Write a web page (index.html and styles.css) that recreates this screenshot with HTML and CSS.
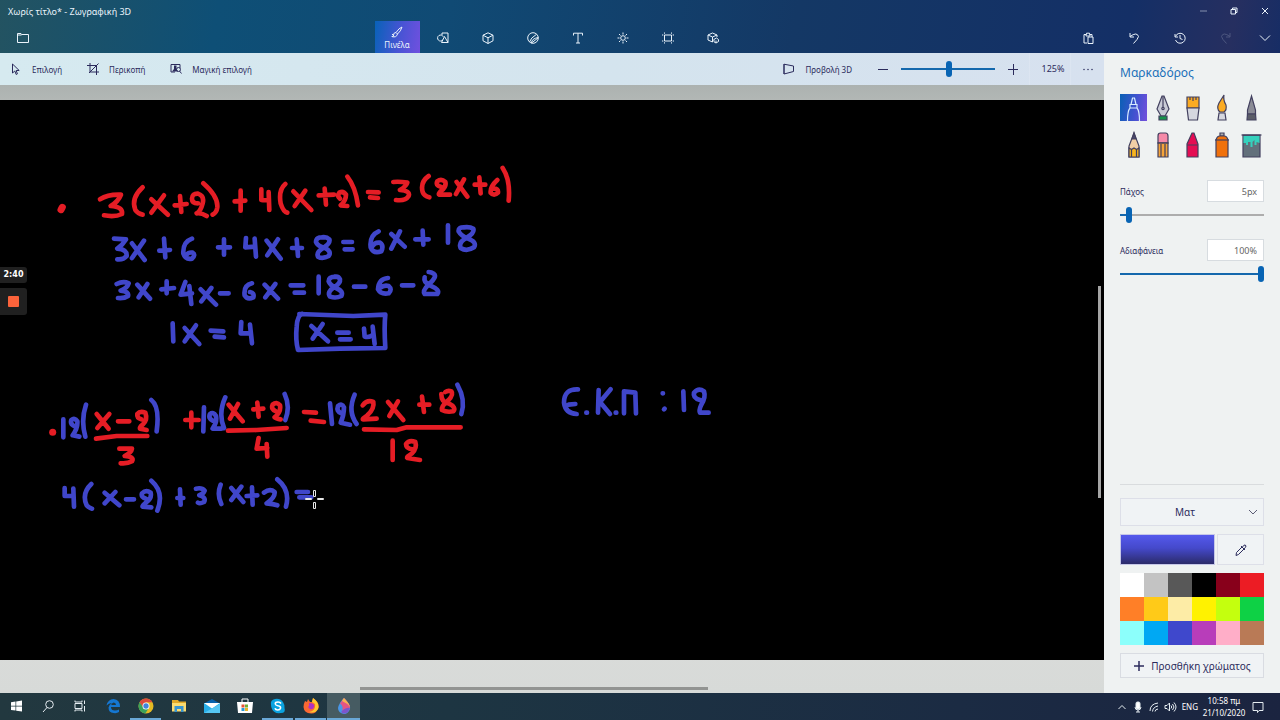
FILE: index.html
```html
<!DOCTYPE html>
<html lang="el">
<head>
<meta charset="utf-8">
<meta name="viewport" content="width=device-width, initial-scale=1">
<title>Χωρίς τίτλο* - Ζωγραφική 3D</title>
<link rel="stylesheet" href="styles.css">
</head>
<body>
<div class="app">
  <header class="header">
    <div class="titlebar">
      <span class="title">Χωρίς τίτλο* - Ζωγραφική 3D</span>
      <div class="window-buttons">
        <button class="win-btn dim" aria-label="Ελαχιστοποίηση"><svg class="ico8" viewBox="0 0 8 8"><path d="M1 4h7"/></svg></button>
        <button class="win-btn" aria-label="Επαναφορά"><svg class="ico8" viewBox="0 0 8 8"><path d="M1 2.5h4.500v4.500H1zM2.500 2.500V1H7v4.500H5.500"/></svg></button>
        <button class="win-btn" aria-label="Κλείσιμο"><svg class="ico8" viewBox="0 0 8 8"><path d="M1 1l6 6M7 1L1 7"/></svg></button>
      </div>
    </div>
    <nav class="menu">
      <button class="menu-btn" aria-label="Μενού"><svg class="ico12" viewBox="0 0 12 12"><path d="M.500 2V10.500h11V2.500H5L4 1.500H.500v1.500h3.500l1-.500"/></svg></button>
      <div class="tabs">
        <button class="menu-btn selected"><svg class="ico12" viewBox="0 0 12 12"><path d="M11 1Q8 2 5 6.500L6.500 8Q10 5 11 1zM5 6.500Q2.500 6.500 2.500 9T.8 10.500Q5.500 12 6.500 8M1 8l2 2"/></svg><span>Πινέλα</span></button>
        <button class="menu-btn" aria-label="Σχήματα 2Δ"><svg class="ico12" viewBox="0 0 12 12"><path d="M5 3V1h6v9.500H9.500M7.500 4.500l3.500 6H4.500zM6 7.800A3 3 0 1 1 6.300 4.800"/></svg></button>
        <button class="menu-btn" aria-label="Σχήματα 3Δ"><svg class="ico12" viewBox="0 0 12 12"><path d="M6 .800l5 2.400v5.600l-5 2.700-5-2.700V3.200zM1 3.200l5 2.600 5-2.600M6 5.800v5.700"/></svg></button>
        <button class="menu-btn" aria-label="Αυτοκόλλητα"><svg class="ico12" viewBox="0 0 12 12"><circle cx="6" cy="6" r="5.300"/><path d="M2.500 10Q3.500 6 9.500 2.300M4.500 11Q4.500 6.500 11.300 5.500M4.500 11L11 6"/></svg></button>
        <button class="menu-btn" aria-label="Κείμενο"><svg class="ico12" viewBox="0 0 12 12"><path d="M1.500 3.500V1.200h9v2.300M6 1.200v9.800M4 11h4"/></svg></button>
        <button class="menu-btn" aria-label="Εφέ"><svg class="ico12" viewBox="0 0 12 12"><circle cx="6" cy="6" r="2.300"/><path d="M6 .500v2M6 9.500v2M.500 6h2M9.500 6h2M2 2l1.500 1.500M8.500 8.500L10 10M10 2L8.500 3.500M2 10l1.500-1.500"/></svg></button>
        <button class="menu-btn" aria-label="Καμβάς"><svg class="ico12" viewBox="0 0 12 12"><path d="M2.500 3V9h7V3zM2.500.500v1.200M9.500.500v1.200M2.500 10.300v1.200M9.500 10.300v1.200M0 3h1.300M10.700 3H12M0 9h1.300M10.700 9H12"/></svg></button>
        <button class="menu-btn" aria-label="Βιβλιοθήκη 3Δ"><svg class="ico12" viewBox="0 0 12 12"><path d="M5.500 10L1 8V3l4.500-2L10 3v2M1 3l4.500 2L10 3M5.500 5v5M6.800 7.500L9.500 6l2 1.500v2L9 11 7 9.800zM9 8.500V11"/></svg></button>
      </div>
      <div class="history">
        <button class="menu-btn" aria-label="Επικόλληση"><svg class="ico12" viewBox="0 0 12 12"><path d="M5 11H2V2.500h2.500V1.200h3v1.300H10V5M4 2.500v1.500h4V2.500M6 5h5v6.500H6z"/></svg></button>
        <button class="menu-btn" aria-label="Αναίρεση"><svg class="ico12" viewBox="0 0 12 12"><path d="M2 1v4h4M2 4.500Q9-.500 10.500 4.500Q10 7 5.500 11.500"/></svg></button>
        <button class="menu-btn" aria-label="Ιστορικό"><svg class="ico12" viewBox="0 0 12 12"><path d="M1 2v3h3M1.500 4.500A5 5 0 1 1 1.500 8M6 3v3.500l2.500 1"/></svg></button>
        <button class="menu-btn faded" aria-label="Επανάληψη"><svg class="ico12" viewBox="0 0 12 12"><path d="M10 1v4H6M10 4.500Q3-.500 1.500 4.500Q2 7 6.500 11.500"/></svg></button>
        <button class="menu-btn narrow" aria-label="Σύμπτυξη"><svg class="ico12" viewBox="0 0 12 12"><path d="M1 3.500l5 5 5-5"/></svg></button>
      </div>
    </nav>
  </header>

  <main class="main">
    <section class="editor">
      <div class="toolbar">
        <div class="tools-left">
          <button class="tool"><svg class="ico12" viewBox="0 0 12 12"><path d="M2.500 1v9l2.300-2 1.400 3.500 1.200-.600L6.200 7.500h3z"/></svg>Επιλογή</button>
          <button class="tool"><svg class="ico12" viewBox="0 0 12 12"><path d="M3 0v9h9M0 2.500h9.500V12M2 10l9.500-9.500"/></svg>Περικοπή</button>
          <button class="tool"><svg class="ico12" viewBox="0 0 12 12"><path d="M5 9H1V1.500h9V5M11.500 10.500L9.500 8"/><circle cx="8.500" cy="6.500" r="2"/><path class="solid" d="M4 2.500h2.500V6L8 8.500H2L4 6z"/></svg>Μαγική επιλογή</button>
        </div>
        <div class="tools-right">
          <button class="tool"><svg class="ico12" viewBox="0 0 12 12"><path d="M1 1.200L10.500 3v5.500L1 11zM1 1v10"/></svg>Προβολή 3D</button>
          <button class="zoom-btn" aria-label="Σμίκρυνση"><svg class="ico12" viewBox="0 0 12 12"><path d="M1 6.500h10"/></svg></button>
          <input class="range zoom-range" type="range" min="0" max="100" value="51" aria-label="Ζουμ">
          <button class="zoom-btn" aria-label="Μεγέθυνση"><svg class="ico12" viewBox="0 0 12 12"><path d="M1 6.500h10M6.500 1v11"/></svg></button>
          <span class="zoom-value">125%</span>
          <button class="more" aria-label="Περισσότερα"><svg class="ico12" viewBox="0 0 12 12"><path class="dots" d="M2 6.500h.010M6 6.500h.010M10 6.500h.010"/></svg></button>
        </div>
      </div>

      <div class="workspace">
        <svg class="canvas" viewBox="0 100 1104 560" preserveAspectRatio="xMinYMin meet" role="img" aria-label="Χειρόγραφη επίλυση εξισώσεων">
          <g class="ink red" transform="translate(40 160) scale(.3333)">
            <path class="blob" d="M63 149L67 142"/>
            <path d="M180 118Q205 102 243 104Q235 125 212 138Q250 140 246 162Q225 172 192 166M308 82Q272 115 286 150Q294 162 308 164M334 118L384 164M372 106L334 158M404 136L440 132M420 108L424 156"/>
            <path d="M474 130Q456 130 456 116Q456 100 474 101Q494 108 488 130Q482 154 470 160Q484 158 500 168M490 70Q535 110 532 142Q530 158 518 164M584 124L616 122M602 92V152M664 88V120Q680 122 686 118M686 96L688 150M736 72Q715 90 722 130Q730 156 742 158"/>
          </g>
          <g class="ink red" transform="translate(280 160) scale(.3333)">
            <path d="M40 94L94 150M76 92L44 138M116 106L162 104M134 86L138 134M180 116Q170 108 178 98Q190 92 198 104Q198 122 182 136L202 138M202 50Q226 80 234 136M264 96L296 97M270 112L294 114"/>
            <path d="M340 66Q358 64 382 68Q380 78 360 90Q392 92 386 108Q376 124 348 120M446 48Q420 66 428 96Q432 108 448 112M482 80Q466 76 472 64Q484 54 496 66Q500 80 484 92Q474 102 478 104L510 104M530 66L562 110M552 58L528 102M584 74L616 74M598 52L602 100M652 60Q630 80 632 98Q642 110 654 98Q656 84 638 86M668 24Q692 60 686 122"/>
          </g>
          <g class="ink blue" transform="translate(40 160) scale(.3333)">
            <path d="M222 236L258 238Q250 252 232 266Q262 268 260 288Q250 300 232 298M276 250L314 300M312 242L276 294M358 272L390 270M372 236L376 292M456 236Q428 246 430 280Q436 300 456 296Q468 284 458 278Q446 276 440 284M534 262H570M552 238V284M618 234L616 262L646 260M644 236L648 290M680 242L722 296M714 238L682 286"/>
            <path d="M230 372Q250 362 266 370Q262 384 242 392Q268 394 264 408Q252 416 234 414M292 374L330 416M322 372L296 412M364 388L402 384M380 364V400M436 366L422 404L456 400M448 378L454 432M482 388L528 434M514 384L484 424M540 400H566M636 370Q610 376 614 406Q622 420 640 412Q644 398 630 396M674 374L714 416M706 372L676 412"/>
            <path d="M398 490L400 544M434 504L478 552M468 496L434 544M512 512L550 514M524 530L552 532M604 486L602 520H632M630 494L636 550"/>
          </g>
          <g class="ink blue" transform="translate(280 160) scale(.3333)">
            <path d="M36 264H66M50 238L54 288M130 232Q108 230 108 246Q112 258 134 264Q156 274 146 288Q128 298 114 290Q108 276 130 264Q152 250 148 238Q140 230 126 232M190 246H216M194 268H218M296 214Q268 226 272 262Q280 282 304 274Q312 256 300 248Q284 246 278 258M334 222L374 260M360 214L334 266M406 238H446M428 212L430 254M504 196V248M556 202Q534 200 536 214Q544 228 564 236Q592 246 582 262Q560 276 542 264Q534 246 562 232Q584 218 580 206Q570 200 552 202"/>
            <path d="M32 376H70M44 398H72M116 350V400M168 350Q146 350 146 364Q150 376 168 384Q192 394 184 408Q168 416 150 410Q140 396 162 382Q182 370 180 358Q176 348 164 350M222 380H256M324 354Q296 356 294 388Q302 404 326 400Q338 388 326 378Q312 374 300 384M366 376H400M434 352Q430 366 450 376Q482 390 472 402H434Q426 392 448 372Q472 350 462 342Q454 336 446 336"/>
            <path d="M58 462L220 468L316 464Q312 500 316 564L180 566L54 570Q46 540 50 500Q52 466 66 462M94 498L144 544M128 492L98 536M172 518H206M180 538H212M252 506L254 530Q266 534 280 524M278 500L284 552"/>
          </g>
          <g class="ink red" transform="translate(40 370) scale(.3333)">
            <path class="blob" d="M38 187h.100"/>
            <path d="M170 132L206 176M208 132L172 174M234 154H268M304 148Q290 144 292 132Q300 122 316 128Q324 150 308 164Q298 172 300 176L320 180M168 206L230 198H322M238 236H276Q274 248 254 258Q284 260 276 274Q262 282 242 280M436 150H476M454 128V172"/>
            <path d="M566 104L608 154M594 102L570 146M640 118L670 116M652 98L656 140M708 124Q692 118 698 104Q710 94 720 106Q724 126 704 142Q708 146 722 148M564 182L650 180L740 174M656 204L650 236L682 234M680 222L682 260"/>
          </g>
          <g class="ink blue" transform="translate(40 370) scale(.3333)">
            <path d="M70 148V202M102 168Q90 162 94 150Q104 142 112 154Q114 174 98 196L118 200M138 104Q122 150 136 200M334 90Q360 110 350 184M492 112L490 184M518 152Q504 146 510 132Q520 124 528 138Q532 156 518 176L544 176M556 82Q534 130 552 174M734 72Q752 110 736 150"/>
            <path d="M74 354V378H100M100 356L102 410M154 342Q124 370 140 406Q148 414 156 416M194 368L238 406M226 366L194 400M258 388H282M318 386Q302 382 306 370Q318 358 332 368Q336 386 318 398Q306 408 308 410L334 412M334 332Q374 366 352 422M412 384H430M420 358L422 404M468 356Q486 352 494 362Q490 372 478 376Q500 382 492 396Q480 402 474 398M542 344Q530 374 544 402M574 354L610 396M604 350L574 390M620 378L652 376M636 352L638 404M672 368Q690 354 704 366Q706 382 680 400Q700 402 712 406M712 328Q752 360 738 410"/>
          </g>
          <g class="ink red" transform="translate(280 370) scale(.3333)">
            <path d="M72 126L108 128M92 152L132 156M248 106Q262 88 280 96Q284 116 262 136Q244 148 250 148L290 146M324 96L370 150M354 94L328 138M418 104H448M426 80L432 126M484 72Q484 98 506 100Q530 112 520 124Q500 128 486 120Q484 108 504 92Q522 74 514 64Q504 60 496 66M252 178L350 180L380 172H542M338 212V270M398 238Q378 236 378 222Q388 208 406 216Q412 234 396 250Q378 262 382 264L420 270"/>
          </g>
          <g class="ink blue" transform="translate(280 370) scale(.3333)">
            <path d="M150 100L156 162M184 130Q168 124 174 108Q186 98 192 112Q192 136 182 158L210 164M224 74Q202 124 230 162M532 44Q558 90 544 132M50 366H84M58 382H94"/>
          </g>
          <g class="ink blue" transform="translate(540 370) scale(.3333)">
            <path d="M114 58Q72 56 72 98Q76 130 110 132M86 104L106 102M139 128h2M176 60L174 128M212 58L180 96L210 132M227 128h2M252 130V64L286 68L288 130M368 70h1M372 118L374 116M430 64L432 120M480 90Q458 84 462 68Q476 52 492 64Q498 82 484 104Q476 122 480 128H506"/>
          </g>
          <g class="cursor"><path d="M313.500 490.500h2v6h-2zM313.500 502.500h2v6h-2zM305.500 498.500h6v1h-6zM317.500 498.500h6v1h-6z"/></g>
        </svg>
        <div class="scroll-v"></div>
        <div class="scroll-h"></div>
        <div class="recorder">
          <span class="rec-time">2:40</span>
          <button class="rec-stop" aria-label="Διακοπή εγγραφής"><span class="rec-square"></span></button>
        </div>
      </div>
    </section>

    <aside class="panel">
      <h1 class="panel-title">Μαρκαδόρος</h1>
      <div class="brushes">
        <button class="brush active" aria-label="Μαρκαδόρος"><svg viewBox="0 0 27 27"><path class="marker" d="M7.500 27Q7.500 17 10 14h7Q19.500 17 19.500 27M10 14V10.500h7V14M11 10.500L12.500 4h2L16 10.500"/></svg></button>
        <button class="brush" aria-label="Πένα καλλιγραφίας"><svg viewBox="0 0 27 27"><path fill="#c9cbd6" d="M13 2h2l5 13-4 7h-4l-4-7z"/><path d="M14 2v11"/><circle cx="14" cy="14.500" r="1.200"/><path fill="#16934a" d="M10 22h8v4h-8z"/></svg></button>
        <button class="brush" aria-label="Πινέλο λαδιού"><svg viewBox="0 0 27 27"><path fill="#fbab22" d="M8 3h12v11H8z"/><path fill="#d5d7df" d="M8 14h12l-1.500 12h-9z"/><path d="M11 3v3M14 3v4M17 3v3"/></svg></button>
        <button class="brush" aria-label="Ακουαρέλα"><svg viewBox="0 0 27 27"><path fill="#fbab22" d="M16 1Q15 6 18 11Q19 16 16 18h-4Q8 15 11 9Z"/><path fill="#d5d7df" d="M11 19h6l1 7h-8z"/></svg></button>
        <button class="brush" aria-label="Πένα εικονοστοιχείων"><svg viewBox="0 0 27 27"><path fill="#8b8c96" d="M14.500 2L18.500 16v4h-8v-4z"/><path fill="#5b5d68" d="M10.500 20h8l.500 6h-9z"/></svg></button>
        <button class="brush" aria-label="Μολύβι"><svg viewBox="0 0 27 27"><path fill="#f2cfa6" d="M14 2l5 13v11H9V15z"/><path fill="#4e4c70" d="M14 2l2 6h-4z"/><path fill="#f8b51f" d="M9 17l2.500 1.500L14 17l2.500 1.500L19 17v9H9z"/><path d="M11.500 19v7M16.500 19v7"/></svg></button>
        <button class="brush" aria-label="Γόμα"><svg viewBox="0 0 27 27"><path fill="#f58aa8" d="M9 12V5Q9 2 11.500 2h5Q19 2 19 5v7z"/><path fill="#f5a43a" d="M9 12h10v14H9z"/><path d="M12 13v13M16 13v13M8.500 12h11"/></svg></button>
        <button class="brush" aria-label="Κηρομπογιά"><svg viewBox="0 0 27 27"><path fill="#e50d53" d="M13 2h2l4 11v13H8V13zM8 14h11"/></svg></button>
        <button class="brush" aria-label="Σπρέι"><svg viewBox="0 0 27 27"><path fill="#aaa" d="M12 5h4V2h-4z"/><path fill="#f0710c" d="M8 9Q9 5 12 5h4q3 0 4 4v17H8z"/><path d="M7 9h14"/></svg></button>
        <button class="brush" aria-label="Γέμισμα"><svg viewBox="0 0 27 27"><path fill="#62707b" d="M6 4h17v22H6z"/><path class="paint" d="M6.500 5h16v7l-3-1v3h-2V9l-2 2v5h-2v-5H11v3H9v-2H6.500z"/><path d="M4.500 4h20"/></svg></button>
      </div>
      <div class="field">
        <label for="size">Πάχος</label><input class="number" id="size" type="text" value="5px">
      </div>
      <input class="range size-range" type="range" min="0" max="100" value="4" aria-label="Πάχος">
      <div class="field">
        <label for="opacity">Αδιαφάνεια</label><input class="number" id="opacity" type="text" value="100%">
      </div>
      <input class="range full-range" type="range" min="0" max="100" value="100" aria-label="Αδιαφάνεια">
      <div class="material">
        <div class="select-wrap">
          <select class="select" aria-label="Υλικό"><option>Ματ</option></select>
          <svg class="ico12 chevron" viewBox="0 0 12 12"><path d="M2 4l4 4 4-4"/></svg>
        </div>
        <div class="current">
          <button class="current-color" aria-label="Τρέχον χρώμα"></button>
          <button class="picker" aria-label="Σταγονόμετρο"><svg class="ico12" viewBox="0 0 12 12"><path d="M1 11.500l.500-3L7 3l2 2-5.500 5.500zM6 2l4 4M7.500 3L9 1.200Q10.500.500 11 2q0 1-2 3"/></svg></button>
        </div>
        <div class="palette">
          <button class="swatch c1" aria-label="Λευκό"></button><button class="swatch c2" aria-label="Ανοιχτό γκρι"></button><button class="swatch c3" aria-label="Γκρι"></button><button class="swatch c4" aria-label="Μαύρο"></button><button class="swatch c5" aria-label="Σκούρο κόκκινο"></button><button class="swatch c6" aria-label="Κόκκινο"></button>
          <button class="swatch c7" aria-label="Πορτοκαλί"></button><button class="swatch c8" aria-label="Χρυσό"></button><button class="swatch c9" aria-label="Κρεμ"></button><button class="swatch c10" aria-label="Κίτρινο"></button><button class="swatch c11" aria-label="Λάιμ"></button><button class="swatch c12" aria-label="Πράσινο"></button>
          <button class="swatch c13" aria-label="Γαλάζιο"></button><button class="swatch c14" aria-label="Τιρκουάζ"></button><button class="swatch c15" aria-label="Ινδικό"></button><button class="swatch c16" aria-label="Μωβ"></button><button class="swatch c17" aria-label="Ροζ"></button><button class="swatch c18" aria-label="Καφέ"></button>
        </div>
        <button class="add-color"><svg class="ico12" viewBox="0 0 12 12"><path d="M1 6h10M6 1v10"/></svg>Προσθήκη χρώματος</button>
      </div>
    </aside>
  </main>

  <footer class="taskbar">
    <div class="apps">
      <button class="task system" aria-label="Έναρξη"><svg viewBox="0 0 16 16"><path fill="#fff" d="M3 4.200l4.500-.700v4.200H3zM8.200 3.400L14 2.500v5.200H8.200zM3 8.400h4.500v4.200L3 12zM8.200 8.400H14v5.200l-5.800-.900z"/></svg></button>
      <button class="task system" aria-label="Αναζήτηση"><svg class="line" viewBox="0 0 16 16"><circle cx="9.500" cy="6.500" r="3.800"/><path d="M7 9.500L3 14"/></svg></button>
      <button class="task system" aria-label="Προβολή εργασιών"><svg class="line" viewBox="0 0 16 16"><path d="M3 5.500h7v5H3zM3 2.500v1.500h7V2.500M3 13.500V12h7v1.500M12.500 2.500V6M12.500 8v5.500"/></svg></button>
      <button class="task" aria-label="Edge"><svg viewBox="0 0 16 16"><path fill="#1577d2" d="M1.500 7.500Q3 1 8.500 1Q15 1.500 15 9H6Q6 12.500 10 12.500Q12.500 12.500 14 11.500V14Q12 15.500 8.500 15Q3.500 14.500 3.500 9.500Q4 6.500 7 5Q3.500 5 1.500 7.500zM6.200 7H11Q11 4.500 8.700 4.500Q6.500 5 6.200 7z"/></svg></button>
      <button class="task running" aria-label="Chrome"><svg viewBox="0 0 16 16"><circle cx="8" cy="8" r="7.500" fill="#e5ba23"/><path fill="#db4a3c" d="M1.500 4.300A7.500 7.500 0 0 1 14.500 4.300H8L5 10z"/><path fill="#3ba35b" d="M1.500 4.300A7.500 7.500 0 0 0 7.300 15.500L10.500 10.500H6z"/><circle cx="8" cy="8" r="3.500" fill="#fff"/><circle cx="8" cy="8" r="2.700" fill="#4284db"/></svg></button>
      <button class="task" aria-label="Εξερεύνηση αρχείων"><svg viewBox="0 0 16 16"><path fill="#e3a927" d="M1 2h6l1 1.500h7V13H1z"/><path fill="#fbdb70" d="M1 5h14v8.500H1z"/><path fill="#3995d0" d="M3.500 8h9v6H10v-3H6v3H3.500z"/></svg></button>
      <button class="task" aria-label="Αλληλογραφία"><svg viewBox="0 0 16 16"><path fill="#0963ad" d="M0 5.500L8 1l8 4.500z"/><path fill="#28aee8" d="M0 5h16v10H0z"/><path fill="#fff" d="M0 5h16L8 10.500z"/><path fill="#56c7f3" d="M0 15L16 6v9z"/></svg></button>
      <button class="task" aria-label="Store"><svg viewBox="0 0 16 16"><path fill="none" stroke="#fff" d="M5 5V1h6v4"/><path fill="#fff" d="M0 4h16l-1 11H1z"/><path fill="#e65335" d="M4.500 6.500h3v3h-3z"/><path fill="#71ae35" d="M8 6.500h3v3H8z"/><path fill="#299bd7" d="M4.500 10h3v3h-3z"/><path fill="#e9b52b" d="M8 10h3v3H8z"/></svg></button>
      <button class="task running" aria-label="Skype"><svg viewBox="0 0 16 16"><path fill="#0aa2df" d="M5 1Q10 0 13 4q2 3 1.500 6Q16 15 11 15Q4 16 2 11Q1 9 1 7Q0 2 5 1z"/><path class="skype-s" d="M11 5.500Q10 4 8 4Q5 4 5.300 6Q5.500 7.300 8 7.800Q11 8.300 10.500 10.300Q10 12 7.700 12Q5.500 12 5 10.300"/></svg></button>
      <button class="task running" aria-label="Firefox"><svg viewBox="0 0 16 16"><path fill="#fb6833" d="M2 3l2 1L5 1l2 3h2L10 0Q17 5 15.500 10Q13 16 8 15.500Q1 15 .500 9Q.500 6 2 3z"/><path fill="#ffc92d" d="M10 0Q17 5 15 11Q12 16 6 14Q13 13 12 6L9 4z"/><path fill="#af31c3" d="M6 5Q12 5 11 9Q10 12 7 11Q4 9 6 8z"/></svg></button>
      <button class="task current-app" aria-label="Ζωγραφική 3D"><svg viewBox="0 0 16 16"><path fill="#4996e8" d="M8 0Q15 7 14 11Q12 16 8 16Q2 15 2 10Q3 5 8 0z"/><path fill="#e35584" d="M8 0Q15 7 14 10Q10 10 6 13Q8 8 4 5.500z"/><path fill="#f7b352" d="M8 0Q13 5 14 9Q11 5 6 3Q7 1 8 0z"/><path fill="#7c55cb" d="M14 10Q10 9 5 14Q8 17 12 14z"/></svg></button>
    </div>
    <div class="tray">
      <svg class="line" viewBox="0 0 16 16"><path d="M4.500 10L8 6.500l3.500 3.500"/></svg>
      <svg class="line" viewBox="0 0 16 16"><rect x="6" y="3" width="4" height="7" rx="1.500" fill="#fff"/><path d="M5 8Q5 11 8 11T11 8M8 11v2M6 13h4"/></svg>
      <svg class="line" viewBox="0 0 16 16"><path d="M4 12Q4 5 12 4M6.500 12.500Q7 8 12 7M9 12.500Q9 10.500 12 10"/></svg>
      <svg class="line" viewBox="0 0 16 16"><path d="M3 6.500h2L7.500 4v8L5 9.500H3zM9 6.500q1.500 1.500 0 3M10.500 5q3 3 0 6M12 3.500q4 4.500 0 9"/></svg>
      <span class="lang">ENG</span>
      <time class="clock" datetime="2020-10-21T10:58">10:58 πμ<br>21/10/2020</time>
      <svg class="line notify" viewBox="0 0 16 16"><path d="M3 3.500h10v8H9L7.500 13.500V11.500H3z"/></svg>
    </div>
  </footer>
</div>
</body>
</html>
```

FILE: styles.css
```css
* { box-sizing: border-box; }
body {
  margin: 0;
  font-family: "Noto Sans", "Open Sans", sans-serif;
  font-size: 8px;
  color: #2b2b5c;
}
button, input, select { font: inherit; color: inherit; margin: 0; padding: 0; }
button { border: 0; background: none; display: flex; align-items: center; justify-content: center; }
svg { display: block; flex: none; }
.app { display: flex; flex-direction: column; min-height: 100vh; }

/* Header */
.header {
  height: 53px;
  display: flex;
  flex-direction: column;
  color: #eaf3fb;
  background: linear-gradient(100deg, #235361 0%, #0e4f76 17%, #104a74 35%, #143865 62%, #142f66 88%, #262f60 96%, #172d65 100%);
}
.titlebar { display: flex; justify-content: space-between; height: 21px; align-items: center; padding-left: 8px; }
.title { font-size: 9px; padding-top: 2px; }
.window-buttons { display: flex; }
.win-btn { width: 31px; height: 21px; }
.dim { opacity: .5; }
.menu { flex: 1; display: flex; justify-content: space-between; }
.tabs, .history { display: flex; }
.menu-btn { width: 45px; height: 32px; flex-direction: column; gap: 2px; padding-top: 1px; }
.history .menu-btn { width: 46px; }
.history .narrow { width: 31px; }
.menu-btn.faded { opacity: .2; }
.menu-btn.selected { margin-right: 1px; background: linear-gradient(100deg, #0862b8, #4854d4 55%, #7150df); line-height: 10px; }
.ico8, .ico12 { fill: none; stroke: currentColor; stroke-width: 1; }
.ico8 { width: 8px; height: 8px; }
.ico12 { width: 12px; height: 12px; }
.solid { fill: currentColor; stroke: none; }
.dots { stroke-width: 1.5; stroke-linecap: round; }

/* Editor */
.main { flex: 1; display: flex; }
.editor { flex: 1; min-width: 0; display: flex; flex-direction: column; }
.toolbar {
  height: 32px;
  display: flex;
  justify-content: space-between;
  background: linear-gradient(90deg, #d6eaf0, #d4e4ee 55%, #d7e1ef);
}
.tools-left, .tools-right { display: flex; align-items: center; }
.tools-left { gap: 25px; padding-left: 10px; }
.tool { gap: 10px; }
.tools-right .tool { margin-right: 25px; }
.zoom-btn { width: 12px; height: 24px; }
.zoom-range { width: 94px; margin: 0 12px; }
.zoom-value { width: 42px; margin-left: 10px; padding-left: 6px; text-align: center; font-size: 9px; border: solid #dce5f1; border-width: 0 1px; line-height: 32px; }
.more { width: 33px; height: 32px; }
.range { appearance: none; -webkit-appearance: none; display: block; height: 16px; background: linear-gradient(#1468ad, #1468ad) center / 100% 2px no-repeat; }
.range::-webkit-slider-thumb { -webkit-appearance: none; width: 6px; height: 16px; border-radius: 3px; background: #0864b4; }
.workspace {
  position: relative;
  flex: 1;
  display: flex;
  padding: 15px 0 33px;
  background: linear-gradient(#acb2b0 0, #b2b7b5 15px, #d9dbd9 93%, #d7dad8);
}
.canvas { width: 100%; min-height: 100%; background: #000; flex: 1; }
.ink { fill: none; stroke-width: 14; stroke-linecap: round; stroke-linejoin: round; }
.red { stroke: #e51d25; }
.blue { stroke: #4046ca; }
.blob { stroke-width: 21; }
.cursor { fill: #000; stroke: #e8e8e8; stroke-width: 1; }
.scroll-v { position: absolute; right: 3px; top: 33%; width: 3px; height: 35%; background: #a5a5a5; }
.scroll-h { position: absolute; left: 360px; bottom: 3px; width: 348px; height: 3px; background: #929492; }
.recorder { position: absolute; left: 0; top: 182px; display: flex; flex-direction: column; gap: 5px; width: 27px; }
.rec-time { height: 16px; line-height: 15px; text-align: center; color: #fff; font-family: "DejaVu Sans", sans-serif; font-weight: 700; font-size: 8px; background: #202020; border-radius: 0 3px 3px 0; }
.rec-stop { height: 27px; background: #202020; border-radius: 0 3px 3px 0; }
.rec-square { width: 11px; height: 11px; border-radius: 1px; background: #fb633b; }

/* Side panel */
.panel { width: 176px; flex: none; display: flex; flex-direction: column; padding: 10px 16px 15px; background: #eff2f2; }
.panel-title { margin: 0 0 11px; font-size: 12px; line-height: 20px; font-weight: 400; color: #1a6fb8; }
.brushes { display: grid; grid-template-columns: repeat(5, 27px); justify-content: space-between; row-gap: 10px; }
.brush { width: 27px; height: 27px; }
.brush svg { width: 27px; height: 27px; fill: none; stroke: #42405f; stroke-width: 1.2; }
.brush.active { background: linear-gradient(100deg, #0960b4, #4052cf 55%, #7550dc); }
.brush .marker { stroke: #d7ecff; }
.brush .paint { fill: #35d1bd; stroke: none; }
.field { display: flex; justify-content: space-between; align-items: center; margin-top: 22px; }
.range + .field { margin-top: 16px; }
.number { width: 57px; height: 22px; padding: 0 6px; text-align: right; font-size: 9px; color: #666; background: #fff; border: 1px solid #d7dce0; }
.field + .range { margin-top: 5px; width: 100%; }
.size-range { background-image: linear-gradient(90deg, #1468ad 6%, #adadad 6%); }
.material { margin-top: auto; padding-top: 13px; border-top: 1px solid #d9dcde; display: flex; flex-direction: column; }
.select-wrap { position: relative; }
.select { appearance: none; width: 100%; height: 28px; padding-right: 14px; text-align-last: center; font-size: 10px; border: 1px solid #dddfe8; background: #f0f3f5; border-radius: 0; }
.chevron { position: absolute; right: 5px; top: 8px; pointer-events: none; color: #5c5c75; }
.current { display: grid; grid-template-columns: 95px 1fr; gap: 2px; margin: 8px 0; }
.current-color { height: 31px; border: 1px solid #c6c7e8; background: linear-gradient(#5459ec, #4549cb 45%, #2b2b69); }
.picker { border: 1px solid #dddfe8; background: #f0f3f5; }
.palette { display: grid; grid-template-columns: repeat(6, 1fr); }
.swatch { height: 24px; }
.c1 { background: #fff; } .c2 { background: #c3c3c3; } .c3 { background: #585858; } .c4 { background: #000; } .c5 { background: #88001b; } .c6 { background: #ec1c24; }
.c7 { background: #ff7f27; } .c8 { background: #ffca18; } .c9 { background: #fdeca6; } .c10 { background: #fff200; } .c11 { background: #c4ff0e; } .c12 { background: #0ed145; }
.c13 { background: #8cfffb; } .c14 { background: #00a8f3; } .c15 { background: #3f48cc; } .c16 { background: #b83dba; } .c17 { background: #ffaec8; } .c18 { background: #b97a56; }
.add-color { height: 25px; margin-top: 8px; gap: 6px; font-size: 10px; border: 1px solid #d9dce2; background: #f0f3f5; }
.add-color .ico12 { stroke-width: 1.5; }

/* Taskbar */
.taskbar { height: 27px; display: flex; justify-content: space-between; color: #fff; background: linear-gradient(90deg, #22383f, #1d3542 35%, #1b2b43 75%, #1b2440); }
.apps, .tray { display: flex; align-items: center; }
.task { width: 33px; height: 27px; border-bottom: 2px solid transparent; }
.task.system { width: 32px; }
.task svg, .tray svg { width: 16px; height: 16px; }
.running { border-bottom-color: #6aa8d7; border-image: linear-gradient(90deg, transparent 9%, #6aa8d7 9%, #6aa8d7 91%, transparent 91%) 2; }
.current-app { background: #465b62; border-bottom-color: #6aa8d7; }
.line { fill: none; stroke: #e6edf2; stroke-width: 1; }
.skype-s { fill: none; stroke: #fff; stroke-width: 1.6; }
.lang { margin-left: 4px; }
.clock { width: 52px; text-align: center; line-height: 12px; }
.tray { padding-right: 14px; }
```
